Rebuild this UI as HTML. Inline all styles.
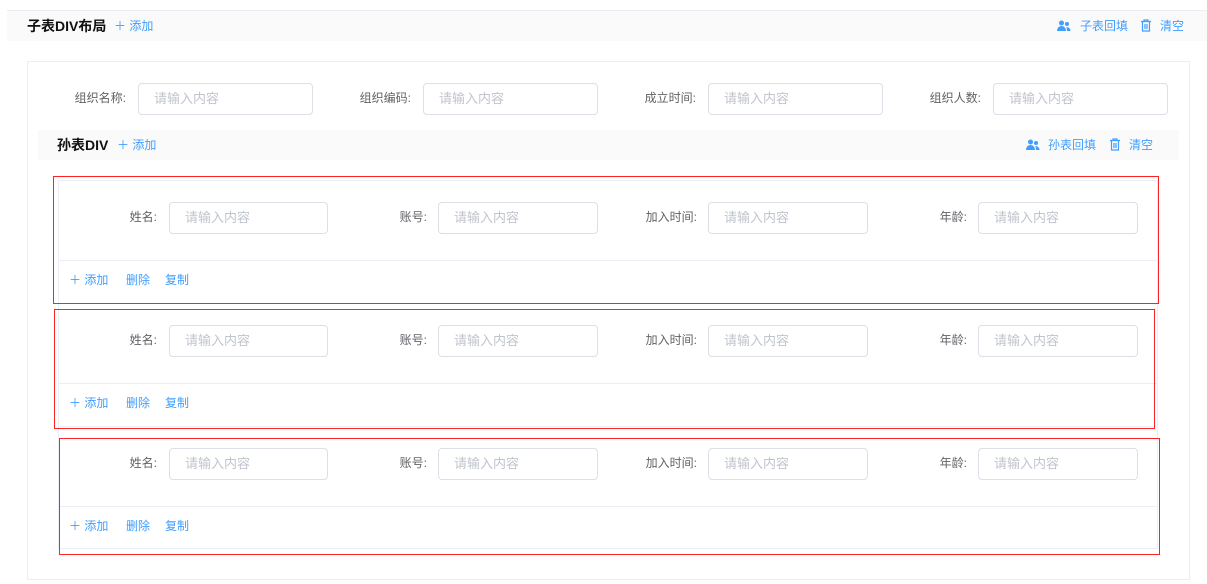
<!DOCTYPE html>
<html><head><meta charset="utf-8"><style>
*{margin:0;padding:0;box-sizing:border-box}
body{width:1207px;height:584px;background:#fff;position:relative;overflow:hidden;font-family:"Liberation Sans","Noto Sans CJK SC",sans-serif;font-size:12px;color:#606266}
.a{position:absolute}
.bar{background:#fafafa}
.t{font-size:14px;font-weight:bold;color:#111;line-height:20px}
.blue{color:#409eff;line-height:16px;font-size:12px;position:absolute}
.inp{position:absolute;border:1px solid #dcdfe6;border-radius:4px;height:32px;line-height:30px;padding-left:15px;color:#c0c4cc;font-size:13px;background:#fff}
.lab{position:absolute;text-align:right;width:100px;line-height:16px;color:#606266}
.card{position:absolute;left:58px;width:1100px;height:123px;border:1px solid #ebeef5;border-bottom:none}
.div{position:absolute;left:0;right:0;top:79px;border-top:1px solid #ebeef5}
.red{position:absolute;border:1px solid #f22}
</style></head><body>
<div class="a bar" style="left:7px;top:10px;width:1200px;height:31px;border-top:1px solid #ebeef5"></div>
<div class="a t" style="left:27px;top:16px">子表DIV布局</div>
<div class="blue" style="left:114px;top:18px">＋ 添加</div>
<svg class="a" style="left:1057px;top:20px" width="14" height="12" viewBox="0 0 14 12"><circle cx="4.5" cy="3" r="2.5" fill="#409eff"/><path d="M0 11c0-3 2-5 4.5-5S9 8 9 11z" fill="#409eff"/><circle cx="10" cy="4" r="2" fill="#409eff"/><path d="M9.5 7c2 0 4 1.5 4 4H10z" fill="#409eff"/></svg>
<div class="blue" style="left:1080px;top:18px">子表回填</div>
<svg class="a" style="left:1140px;top:19px" width="12" height="13" viewBox="0 0 12 13"><path d="M1 2.5h10M4 2.5V1h4v1.5M2.5 2.5v9.5h7V2.5M5 5v5M7 5v5" stroke="#409eff" fill="none" stroke-width="1.2"/></svg>
<div class="blue" style="left:1160px;top:18px">清空</div>

<div class="a" style="left:27px;top:61px;width:1163px;height:519px;border:1px solid #ebeef5"></div>

<div class="lab" style="left:26px;top:90px">组织名称:</div><div class="inp" style="left:138px;top:83px;width:175px">请输入内容</div>
<div class="lab" style="left:311px;top:90px">组织编码:</div><div class="inp" style="left:423px;top:83px;width:175px">请输入内容</div>
<div class="lab" style="left:596px;top:90px">成立时间:</div><div class="inp" style="left:708px;top:83px;width:175px">请输入内容</div>
<div class="lab" style="left:881px;top:90px">组织人数:</div><div class="inp" style="left:993px;top:83px;width:175px">请输入内容</div>

<div class="a bar" style="left:38px;top:130px;width:1141px;height:30px"></div>
<div class="a t" style="left:57px;top:135px">孙表DIV</div>
<div class="blue" style="left:117px;top:137px">＋ 添加</div>
<svg class="a" style="left:1026px;top:139px" width="14" height="12" viewBox="0 0 14 12"><circle cx="4.5" cy="3" r="2.5" fill="#409eff"/><path d="M0 11c0-3 2-5 4.5-5S9 8 9 11z" fill="#409eff"/><circle cx="10" cy="4" r="2" fill="#409eff"/><path d="M9.5 7c2 0 4 1.5 4 4H10z" fill="#409eff"/></svg>
<div class="blue" style="left:1048px;top:137px">孙表回填</div>
<svg class="a" style="left:1109px;top:138px" width="12" height="13" viewBox="0 0 12 13"><path d="M1 2.5h10M4 2.5V1h4v1.5M2.5 2.5v9.5h7V2.5M5 5v5M7 5v5" stroke="#409eff" fill="none" stroke-width="1.2"/></svg>
<div class="blue" style="left:1129px;top:137px">清空</div>

<div class="card" style="top:180px"><div class="div"></div></div>
<div class="card" style="top:303px"><div class="div"></div></div>
<div class="card" style="top:426px;border-bottom:1px solid #ebeef5"><div class="div"></div></div>

<div class="lab" style="left:57px;top:209px">姓名:</div><div class="inp" style="left:169px;top:202px;width:159px">请输入内容</div>
<div class="lab" style="left:327px;top:209px">账号:</div><div class="inp" style="left:438px;top:202px;width:160px">请输入内容</div>
<div class="lab" style="left:597px;top:209px">加入时间:</div><div class="inp" style="left:708px;top:202px;width:160px">请输入内容</div>
<div class="lab" style="left:867px;top:209px">年龄:</div><div class="inp" style="left:978px;top:202px;width:160px">请输入内容</div>
<div class="blue" style="left:69px;top:272px">＋ 添加</div><div class="blue" style="left:126px;top:272px">删除</div><div class="blue" style="left:165px;top:272px">复制</div>

<div class="lab" style="left:57px;top:332px">姓名:</div><div class="inp" style="left:169px;top:325px;width:159px">请输入内容</div>
<div class="lab" style="left:327px;top:332px">账号:</div><div class="inp" style="left:438px;top:325px;width:160px">请输入内容</div>
<div class="lab" style="left:597px;top:332px">加入时间:</div><div class="inp" style="left:708px;top:325px;width:160px">请输入内容</div>
<div class="lab" style="left:867px;top:332px">年龄:</div><div class="inp" style="left:978px;top:325px;width:160px">请输入内容</div>
<div class="blue" style="left:69px;top:395px">＋ 添加</div><div class="blue" style="left:126px;top:395px">删除</div><div class="blue" style="left:165px;top:395px">复制</div>

<div class="lab" style="left:57px;top:455px">姓名:</div><div class="inp" style="left:169px;top:448px;width:159px">请输入内容</div>
<div class="lab" style="left:327px;top:455px">账号:</div><div class="inp" style="left:438px;top:448px;width:160px">请输入内容</div>
<div class="lab" style="left:597px;top:455px">加入时间:</div><div class="inp" style="left:708px;top:448px;width:160px">请输入内容</div>
<div class="lab" style="left:867px;top:455px">年龄:</div><div class="inp" style="left:978px;top:448px;width:160px">请输入内容</div>
<div class="blue" style="left:69px;top:518px">＋ 添加</div><div class="blue" style="left:126px;top:518px">删除</div><div class="blue" style="left:165px;top:518px">复制</div>

<div class="red" style="left:53px;top:176px;width:1106px;height:128px"></div>
<div class="red" style="left:54px;top:309px;width:1101px;height:120px"></div>
<div class="red" style="left:59px;top:438px;width:1101px;height:117px"></div>
</body></html>
